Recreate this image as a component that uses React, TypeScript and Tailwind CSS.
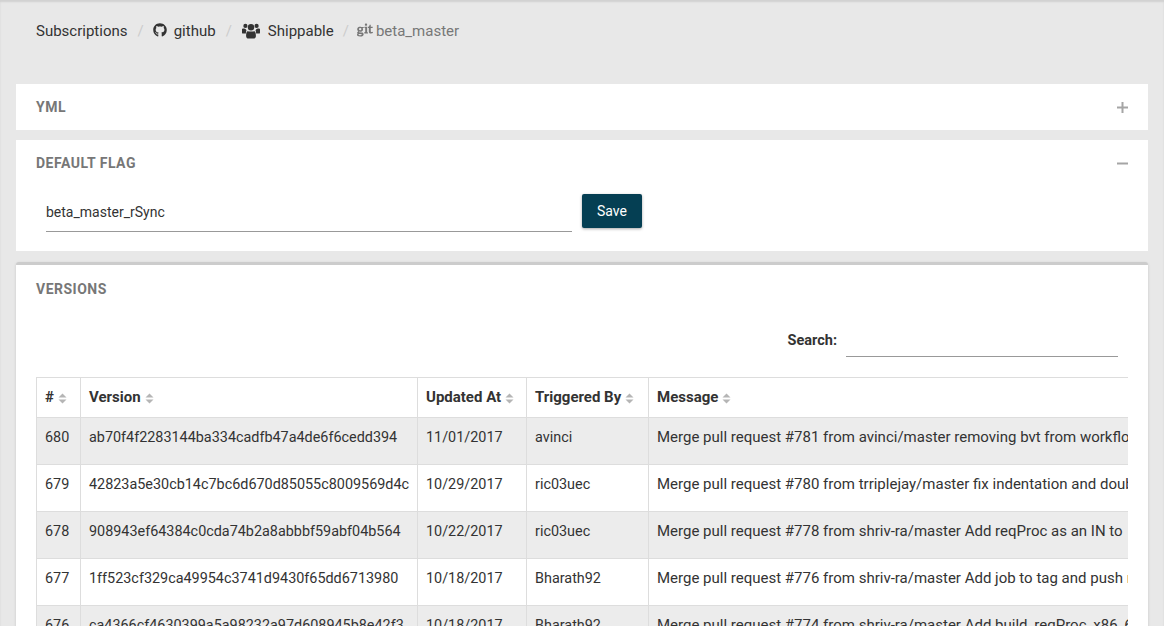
import { FaGit, FaGithub } from "react-icons/fa";

const font = "font-['Roboto',sans-serif]";

const ROWS = [
  ["680", "ab70f4f2283144ba334cadfb47a4de6f6cedd394", "11/01/2017", "avinci", "Merge pull request #781 from avinci/master removing bvt from workflow"],
  ["679", "42823a5e30cb14c7bc6d670d85055c8009569d4c", "10/29/2017", "ric03uec", "Merge pull request #780 from trriplejay/master fix indentation and double"],
  ["678", "908943ef64384c0cda74b2a8abbbf59abf04b564", "10/22/2017", "ric03uec", "Merge pull request #778 from shriv-ra/master Add reqProc as an IN to"],
  ["677", "1ff523cf329ca49954c3741d9430f65dd6713980", "10/18/2017", "Bharath92", "Merge pull request #776 from shriv-ra/master Add job to tag and push reqProc"],
  ["676", "ca4366cf4630399a5a98232a97d608945b8e42f3", "10/18/2017", "Bharath92", "Merge pull request #774 from shriv-ra/master Add build_reqProc_x86_64"],
];

const HEADERS = [
  { label: "#", width: "w-[44px]" },
  { label: "Version", width: "w-[337px]" },
  { label: "Updated At", width: "w-[109px]" },
  { label: "Triggered By", width: "w-[122px]" },
  { label: "Message", width: "w-[600px]" },
];

function SortIcon() {
  return (
    <svg width="9" height="11" viewBox="0 0 9 11" className="ml-1 mt-px shrink-0" fill="#b5b5b5">
      <path d="M4.5 0.5 8.5 4.5H0.5Z" />
      <path d="M0.5 6.5H8.5L4.5 10.5Z" />
    </svg>
  );
}

// three heads with the middle figure in front
function UsersIcon() {
  return (
    <svg width="18" height="16" viewBox="0 0 18 16" className="ml-[10px] mt-[2px] shrink-0" fill="#333">
      <circle cx="9" cy="4.2" r="3.2" />
      <circle cx="3.4" cy="2.9" r="2.1" />
      <circle cx="14.6" cy="2.9" r="2.1" />
      <path d="M0 6.2C0 5.6 1 5.4 2.2 5.6 3.2 5.8 3.9 6.3 4.5 7.2 4 8.3 3.9 9.2 3.9 10.6H1.2C.4 10.6 0 10.2 0 9.4Z" />
      <path d="M18 6.2C18 5.6 17 5.4 15.8 5.6 14.8 5.8 14.1 6.3 13.5 7.2 14 8.3 14.1 9.2 14.1 10.6H16.8C17.6 10.6 18 10.2 18 9.4Z" />
      <path d="M5.2 8.4C5.7 7.9 6.2 8.6 9 8.6S12.3 7.9 12.8 8.4C13.7 9.2 13.9 11 13.9 13 13.9 14.7 12.9 15.6 11.4 15.6H6.6C5.1 15.6 4.1 14.7 4.1 13 4.1 11 4.3 9.2 5.2 8.4Z" />
    </svg>
  );
}

function Separator({ className }: { className: string }) {
  return <span className={`text-[#ccc] ${className}`}>/</span>;
}

export default function App() {
  return (
    <div className={`h-[626px] overflow-hidden bg-[#e8e8e8] text-[#333] ${font} shadow-[inset_0_2px_2px_rgba(0,0,0,0.1)]`}>
      <nav className="flex h-[84px] items-start pl-9 pt-[21px] text-[15px] leading-5">
        <span>Subscriptions</span>
        <Separator className="ml-[10px]" />
        <FaGithub className="ml-[9px] mt-[2px] text-[14px]" />
        <span className="ml-[7px]">github</span>
        <Separator className="ml-[10px]" />
        <UsersIcon />
        <span className="ml-2">Shippable</span>
        <Separator className="ml-[9px]" />
        <FaGit className="ml-2 mt-[1px] text-[16px] text-[#777]" />
        <span className="ml-[3px] text-[#777]">beta_master</span>
      </nav>

      <div className="mx-4 flex flex-col">
        <section className="flex h-[46px] items-center justify-between bg-white pl-5 pr-5">
          <h2 className="text-[14px] font-bold tracking-[0.5px] text-[#777]">YML</h2>
          <svg width="11" height="11" viewBox="0 0 11 11" stroke="#a5a5a5" strokeWidth="2">
            <path d="M5.5 0V11M0 5.5H11" />
          </svg>
        </section>

        <section className="mt-[10px] h-[111px] bg-white pl-5 pr-5">
          <div className="flex h-[46px] items-center justify-between">
            <h2 className="text-[14px] font-bold tracking-[0.5px] text-[#777]">DEFAULT FLAG</h2>
            <svg width="11" height="11" viewBox="0 0 11 11" stroke="#a5a5a5" strokeWidth="2">
              <path d="M0 5.5H11" />
            </svg>
          </div>
          <div className="ml-[10px] mt-2 flex items-start">
            <div className="h-[38px] w-[526px] border-b border-[#999] pt-2 text-[14px] leading-5">beta_master_rSync</div>
            <button className="ml-[10px] h-[34px] w-[60px] rounded-[2px] bg-[#053f53] text-[14px] text-white shadow-[0_1px_3px_rgba(0,0,0,0.35)]">
              Save
            </button>
          </div>
        </section>

        <section className="mt-[11px] h-[400px] rounded-t-[3px] border-t-[3px] border-[#ccc] bg-white px-5 shadow-[0_1px_3px_rgba(0,0,0,0.15)]">
          <h2 className="pt-[14px] text-[14px] font-bold leading-5 tracking-[0.5px] text-[#777]">VERSIONS</h2>
          <div className="mt-[25px] flex h-[33px] items-end justify-end pr-[10px]">
            <label className="mb-[6px] mr-[9px] text-[14.5px] font-bold leading-5">Search:</label>
            <div className="h-[33px] w-[272px] border-b border-[#999]" />
          </div>

          <div className="mt-[20px] overflow-hidden">
            <table className="w-[1212px] table-fixed border-collapse text-[14.4px]">
              <thead>
                <tr className="h-10">
                  {HEADERS.map((h) => (
                    <th key={h.label} className={`${h.width} border border-[#ddd] px-2 text-left text-[15px] font-bold`}>
                      <span className="flex items-center">
                        {h.label}
                        <SortIcon />
                      </span>
                    </th>
                  ))}
                </tr>
              </thead>
              <tbody>
                {ROWS.map((row, i) => (
                  <tr key={row[0]} className={`h-[47px] ${i % 2 === 0 ? "bg-[#ececec]" : "bg-white"}`}>
                    {row.map((cell, j) => (
                      <td
                        key={j}
                        className={`overflow-hidden whitespace-nowrap border border-[#ddd] px-2 align-middle leading-[22px] ${j === 4 ? "pb-2 text-[15px]" : "pb-[6px]"}`}
                      >
                        {cell}
                      </td>
                    ))}
                  </tr>
                ))}
              </tbody>
            </table>
          </div>
        </section>
      </div>
    </div>
  );
}
